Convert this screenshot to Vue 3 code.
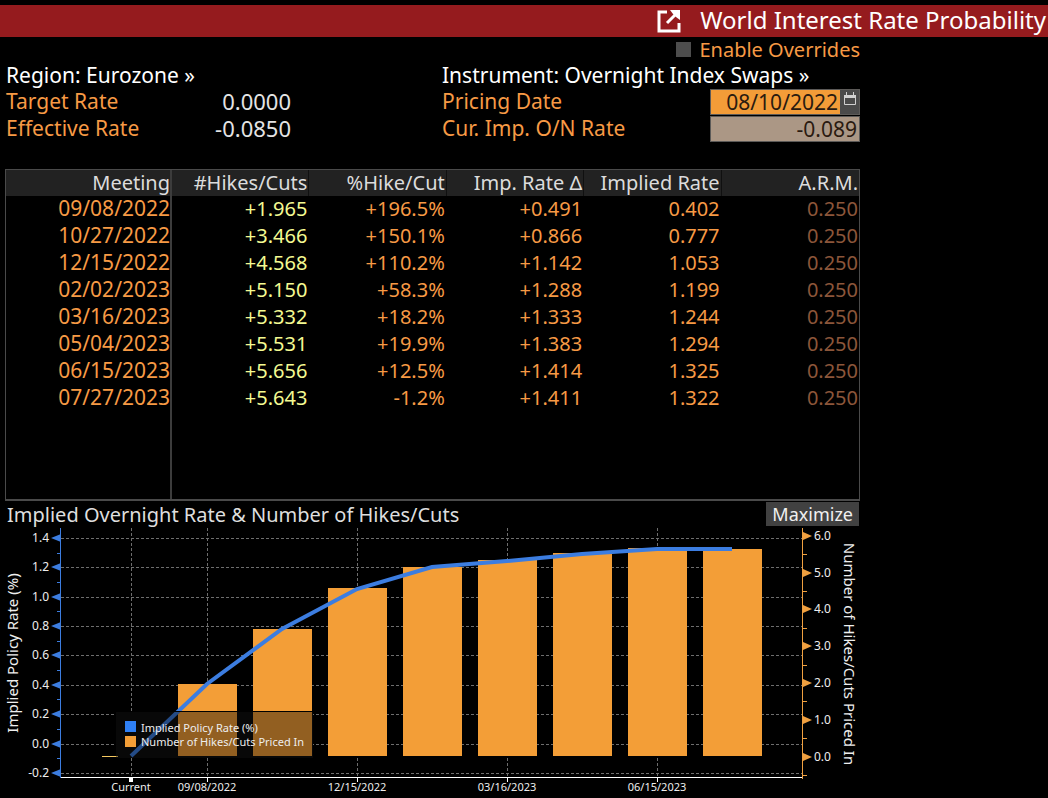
<script setup>
import { ref } from 'vue'

const overrides = ref(false)
const pricingDate = ref('08/10/2022')
const impliedOvernight = ref('-0.089')

const headers = ['Meeting', '#Hikes/Cuts', '%Hike/Cut', 'Imp. Rate Δ', 'Implied Rate', 'A.R.M.']
const meetings = [
  ['09/08/2022', '+1.965', '+196.5%', '+0.491', '0.402', '0.250'],
  ['10/27/2022', '+3.466', '+150.1%', '+0.866', '0.777', '0.250'],
  ['12/15/2022', '+4.568', '+110.2%', '+1.142', '1.053', '0.250'],
  ['02/02/2023', '+5.150', '+58.3%', '+1.288', '1.199', '0.250'],
  ['03/16/2023', '+5.332', '+18.2%', '+1.333', '1.244', '0.250'],
  ['05/04/2023', '+5.531', '+19.9%', '+1.383', '1.294', '0.250'],
  ['06/15/2023', '+5.656', '+12.5%', '+1.414', '1.325', '0.250'],
  ['07/27/2023', '+5.643', '-1.2%', '+1.411', '1.322', '0.250'],
]

// Chart scales, in viewBox units
const plot = { left: 61, right: 803, top: 1, bottom: 250 }
const rateY = (v) => Math.round(216.5 - v * 146.8)
const hikeY = (v) => Math.round(229.5 - v * 36.8)
const slotX = (i) => Math.round(131.4 + i * 75.1)

const rateTicks = [1.4, 1.2, 1.0, 0.8, 0.6, 0.4, 0.2, 0.0, -0.2]
const rateMinor = [1.3, 1.1, 0.9, 0.7, 0.5, 0.3, 0.1, -0.1]
const hikeTicks = [6, 5, 4, 3, 2, 1, 0]
const hikeMinor = [5.5, 4.5, 3.5, 2.5, 1.5, 0.5, -0.5]
const dates = [
  { slot: 0, label: 'Current' },
  { slot: 1, label: '09/08/2022' },
  { slot: 3, label: '12/15/2022' },
  { slot: 5, label: '03/16/2023' },
  { slot: 7, label: '06/15/2023' },
]
const bars = meetings.map((m, i) => ({ x: slotX(i + 1) - 29, y: hikeY(Number(m[1])) }))
const line = [-0.085, ...meetings.map((m) => Number(m[4]))]
  .map((v, i) => `${slotX(i)},${rateY(v)}`)
  .join(' ')
</script>

<template>
  <main class="screen">
    <header class="titlebar">
      <svg class="popout" viewBox="0 0 24 24" aria-hidden="true">
        <path d="M10 3H2V22H22V14" />
        <path d="M10 14L19 5" />
        <path class="head" d="M13 1H23V11L19 8L16 5Z" />
      </svg>
      <h1>World Interest Rate Probability</h1>
    </header>

    <div class="content">
      <label class="overrides">
        <input v-model="overrides" type="checkbox" />
        <span>Enable Overrides</span>
      </label>

      <section class="info">
        <div class="group region">
          <button type="button" class="picker">Region: Eurozone »</button>
          <div class="pair"><span>Target Rate</span><span class="value">0.0000</span></div>
          <div class="pair"><span>Effective Rate</span><span class="value">-0.0850</span></div>
        </div>
        <div class="group instrument">
          <button type="button" class="picker">Instrument: Overnight Index Swaps »</button>
          <div class="pair">
            <label for="pricing-date">Pricing Date</label>
            <div class="field date">
              <input id="pricing-date" v-model="pricingDate" type="text" />
              <button type="button" class="calendar" aria-label="Open calendar">
                <svg viewBox="0 0 14 16" aria-hidden="true">
                  <path class="thin" d="M3.5 1V4M10.500 1V4M1.500 6V13.500H12.500V6" />
                  <path class="band" d="M1 4H13V7H1Z" />
                </svg>
              </button>
            </div>
          </div>
          <div class="pair">
            <label for="overnight">Cur. Imp. O/N Rate</label>
            <div class="field">
              <input id="overnight" v-model="impliedOvernight" type="text" readonly />
            </div>
          </div>
        </div>
      </section>

      <table class="meetings">
        <thead>
          <tr><th v-for="h in headers" :key="h" scope="col">{{ h }}</th></tr>
        </thead>
        <tbody>
          <tr v-for="m in meetings" :key="m[0]"><td v-for="(c, i) in m" :key="i">{{ c }}</td></tr>
          <tr class="spare"><td v-for="h in headers" :key="h"></td></tr>
        </tbody>
      </table>

      <section class="chart">
        <div class="charthead">
          <h2>Implied Overnight Rate &amp; Number of Hikes/Cuts</h2>
          <button type="button" class="maximize">Maximize</button>
        </div>
        <svg class="plot" viewBox="0 0 860 270" role="img" aria-label="Implied Overnight Rate and Number of Hikes/Cuts">
          <g class="grid">
            <line v-for="t in rateTicks" :key="t" :x1="plot.left" :x2="plot.right" :y1="rateY(t) + 0.5" :y2="rateY(t) + 0.5" />
            <line v-for="d in dates" :key="d.slot" :x1="slotX(d.slot) + 0.5" :x2="slotX(d.slot) + 0.5" :y1="plot.top" :y2="plot.bottom" />
          </g>
          <rect class="legendbase" x="116" y="185" width="197" height="46" />
          <rect class="stub" x="102" y="229" width="16" height="1" />
          <rect v-for="b in bars" :key="b.x" class="bar" :x="b.x" :y="b.y" width="59" :height="229 - b.y" />
          <polyline class="rate" :points="line" />

          <rect class="legendshade" x="116" y="185" width="197" height="46" />
          <rect class="legendedge" x="116" y="184" width="197" height="1" />
          <rect class="swatch-rate" x="125" y="194" width="11" height="11" />
          <rect class="bar" x="125" y="209" width="11" height="11" />
          <text class="small" x="141" y="205">Implied Policy Rate (%)</text>
          <text class="small" x="141" y="219">Number of Hikes/Cuts Priced In</text>

          <g class="left">
            <rect x="60" y="1" width="1" height="250" />
            <path v-for="t in rateTicks" :key="t" :d="`M51 ${rateY(t)}L61 ${rateY(t) - 4}V${rateY(t) + 4}Z`" />
            <rect v-for="t in rateMinor" :key="t" x="57" :y="rateY(t)" width="4" height="1" />
          </g>
          <text v-for="t in rateTicks" :key="`r${t}`" class="tick end" x="49" :y="rateY(t) + 4">{{ t.toFixed(1) }}</text>

          <g class="right">
            <rect x="802" y="1" width="1" height="251" />
            <path v-for="t in hikeTicks" :key="t" :d="`M812 ${hikeY(t)}L803 ${hikeY(t) - 4}V${hikeY(t) + 4}Z`" />
            <rect v-for="t in hikeMinor" :key="t" x="803" :y="hikeY(t)" width="4" height="1" />
          </g>
          <text v-for="t in hikeTicks" :key="`h${t}`" class="tick" x="814" :y="hikeY(t) + 4">{{ t.toFixed(1) }}</text>

          <rect class="base" x="61" y="250" width="741" height="1" />
          <rect v-for="d in dates" :key="`m${d.slot}`" class="base" :x="slotX(d.slot) - (d.slot ? 0 : 2)" y="251" :width="d.slot ? 1 : 4" height="4" />
          <text v-for="d in dates" :key="`d${d.slot}`" class="small middle" :x="slotX(d.slot)" y="264">{{ d.label }}</text>

          <text class="axis middle" transform="translate(18 126) rotate(-90)">Implied Policy Rate (%)</text>
          <text class="axis middle" transform="translate(844 127) rotate(90)">Number of Hikes/Cuts Priced In</text>
        </svg>
      </section>
    </div>
  </main>
</template>

<style>
html,
body {
  margin: 0;
  background: #000;
}
</style>

<style scoped>
.screen {
  font-family: "Noto Sans", "Open Sans", sans-serif;
  font-size: 20px;
  line-height: 27px;
  color: #f79a45;
  background: #000;
  overflow: hidden;
}
h1,
h2 {
  margin: 0;
  font-weight: 400;
}
button,
input {
  font: inherit;
  color: inherit;
  margin: 0;
  padding: 0;
  border: 0;
  border-radius: 0;
  background: none;
}
.titlebar {
  display: flex;
  align-items: center;
  justify-content: flex-end;
  gap: 17px;
  height: 32px;
  margin-top: 5px;
  padding-right: 2px;
  background: #951b1e;
  color: #fff;
}
.titlebar h1 {
  height: 32px;
  font-size: 24px;
  line-height: 30px;
}
.popout {
  width: 24px;
  height: 24px;
  margin-right: 2px;
  fill: none;
  stroke: #fff;
  stroke-width: 3;
}
.popout .head {
  fill: #fff;
  stroke: none;
}
.content {
  margin-right: 188px;
  padding-left: 5px;
}
.overrides {
  display: flex;
  align-items: center;
  justify-content: flex-end;
  gap: 8px;
  height: 25px;
}
.overrides input {
  appearance: none;
  width: 15px;
  height: 15px;
  background: #4d4d4d;
}
.overrides input:checked {
  background: #f39c38;
}
.info {
  display: grid;
  grid-template-columns: 286fr 418fr;
  column-gap: 151px;
  font-size: 21px;
  line-height: 25px;
}
.group {
  display: grid;
  grid-auto-rows: 27px;
}
.region {
  padding-left: 1px;
}
.picker {
  justify-self: start;
  color: #fff;
  white-space: nowrap;
}
.pair {
  display: flex;
  justify-content: space-between;
  white-space: nowrap;
}
.value {
  font-size: 22px;
  color: #e4e4e4;
}
.field {
  box-sizing: border-box;
  display: flex;
  width: 150px;
  height: 26px;
  border: 1px solid #5c5a58;
  background: #ab9785;
  color: #2a1a10;
}
.field input {
  flex: 1;
  min-width: 0;
  padding-right: 2px;
  line-height: 22px;
  text-align: right;
}
.date {
  background: #4a4a4a;
}
.date input {
  background: #f39c38;
}
.calendar {
  display: flex;
  justify-content: center;
  width: 19px;
  padding-top: 1px;
}
.calendar svg {
  width: 14px;
  height: 16px;
}
.calendar .thin {
  fill: none;
  stroke: #d0d0d0;
}
.calendar .band {
  fill: #d0d0d0;
}
.meetings {
  width: 100%;
  margin-top: 26px;
  table-layout: fixed;
  border-collapse: separate;
  border-spacing: 0;
  border: 1px solid #4a4a4a;
  border-bottom-width: 2px;
}
.meetings th,
.meetings td {
  height: 27px;
  padding: 0 2px 0 0;
  text-align: right;
  vertical-align: top;
  font-weight: 400;
  line-height: 25px;
  white-space: nowrap;
}
.meetings th {
  height: 26px;
  padding-right: 1px;
  background: #222;
  color: #dcdcdc;
  border-right: 1px solid #101010;
}
.meetings th:first-child {
  width: 164px;
}
.meetings th:last-child {
  border-right: 0;
}
.meetings td:last-child {
  padding-right: 1px;
}
.meetings th:first-child,
.meetings td:first-child {
  padding-right: 0;
  border-right: 2px solid #3c3c3c;
}
.meetings td:first-child {
  font-size: 21px;
}
.meetings td:nth-child(2) {
  color: #f4fa92;
}
.meetings td:nth-child(6) {
  color: #8c563a;
}
.meetings .spare td {
  height: 87px;
}
.charthead {
  display: flex;
  justify-content: space-between;
  align-items: center;
  height: 26px;
  padding-left: 2px;
  color: #dedede;
  white-space: nowrap;
}
.charthead h2 {
  font-size: 20px;
}
.maximize {
  height: 24px;
  padding: 0 6px;
  margin-right: 1px;
  font-size: 18px;
  line-height: 24px;
  background: #414141;
  color: #f0f0f0;
}
.chart .plot {
  display: block;
  width: calc(100% + 5px);
  margin-left: -5px;
}
.plot text {
  fill: #eee;
}
.plot .small {
  font-size: 11px;
}
.plot .tick {
  font-size: 12px;
}
.plot .axis {
  font-size: 15px;
}
.plot .end {
  text-anchor: end;
}
.plot .middle {
  text-anchor: middle;
}
.grid {
  stroke: #6e6e6e;
  stroke-dasharray: 3 2;
}
.bar {
  fill: #f39e37;
}
.stub {
  fill: #f5c860;
}
.rate {
  fill: none;
  stroke: #3c7de0;
  stroke-width: 4;
}
.legendbase {
  fill: #0e0e0e;
}
.legendshade {
  fill: #000;
  fill-opacity: 0.4;
}
.legendedge {
  fill: #000;
}
.swatch-rate {
  fill: #2f80f5;
}
.left {
  fill: #3c7de0;
}
.right {
  fill: #f0a040;
}
.base {
  fill: #fff;
}
</style>
